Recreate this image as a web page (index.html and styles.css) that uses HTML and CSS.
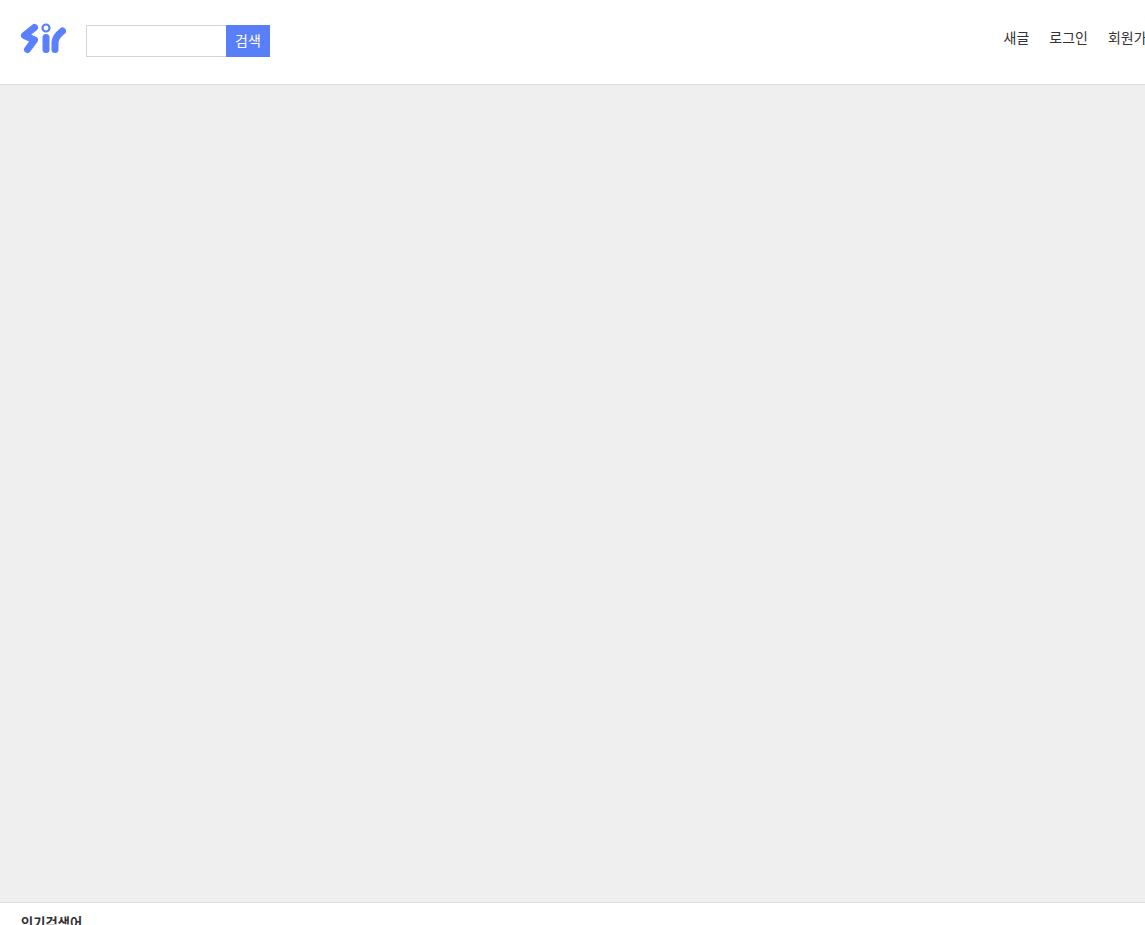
FILE: index.html
```html
<!DOCTYPE html>
<html lang="ko">
<head>
<meta charset="utf-8">
<title>SIR</title>
<link rel="stylesheet" href="styles.css">
</head>
<body>
<header class="site-header">
  <div class="header-left">
    <a class="logo" href="#" aria-label="SIR">
      <svg width="46" height="32" viewBox="0 0 46 32" fill="none" stroke="#5a7fff" stroke-linecap="round" stroke-linejoin="round">
        <path d="M14.500 5.500 L4.500 13.500 L14.500 18 L7.500 27.500" stroke-width="7"/>
        <circle cx="26" cy="6" r="3.500" stroke-width="2.200"/>
        <path d="M26 15.500 V27.500" stroke-width="7"/>
        <path d="M35 27.500 V20 Q35.500 14.500 42.500 9" stroke-width="7"/>
      </svg>
    </a>
    <form class="search">
      <input class="search-input" type="text" aria-label="검색어">
      <button class="search-button" type="button">검색</button>
    </form>
  </div>
  <nav class="top-nav">
    <a href="#">새글</a>
    <a href="#">로그인</a>
    <a href="#">회원가입</a>
  </nav>
</header>
<main class="content"></main>
<footer class="site-footer">
  <h2 class="popular-title">인기검색어</h2>
</footer>
</body>
</html>
```
FILE: styles.css
```css
* { box-sizing: border-box; }
html, body { margin: 0; padding: 0; height: 925px; overflow: hidden; }
body { font-family: "Noto Sans CJK KR", "Liberation Sans", sans-serif; color: #333; background: #fff; }
.site-header {
  width: 1179.500px;
  height: 85px;
  padding: 0 20px;
  display: flex;
  align-items: center;
  justify-content: space-between;
  border-bottom: 1px solid #ddd;
  background: #fff;
}
.header-left { display: flex; align-items: center; gap: 20px; }
.logo { display: block; width: 46px; height: 32px; margin-top: -8px; }
.logo svg { display: block; }
.search { display: flex; margin: -2px 0 0; }
.search-input { width: 140px; height: 32px; border: 1px solid #d5d5d5; border-right: 0; padding: 0 8px; background: #fff; border-radius: 0; outline: 0; }
.search-button { width: 44px; height: 32px; border: 0; padding: 0 0 2px; background: #587ff8; color: #fff; font: inherit; font-size: 14px; }
.top-nav { display: flex; gap: 20px; font-size: 14px; margin-top: -10px; }
.top-nav a { color: #333; text-decoration: none; }
.content { height: 817px; background: #efefef; }
.site-footer { border-top: 1px solid #ddd; padding: 11px 21px 0; background: #fff; height: 100px; }
.popular-title { margin: 0; font-size: 13.300px; font-weight: 700; color: #333; line-height: 18px; }
```
